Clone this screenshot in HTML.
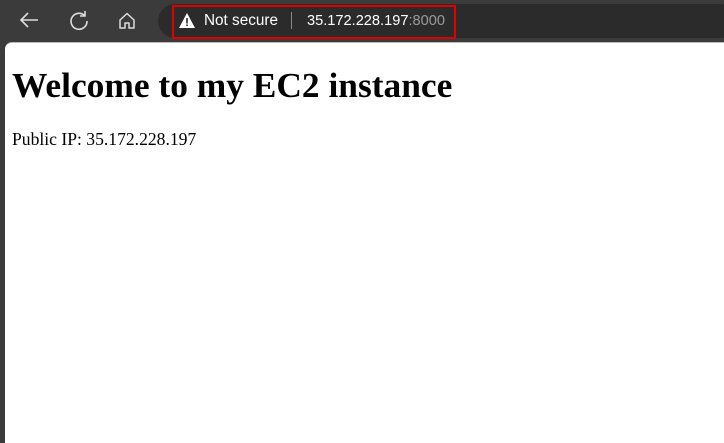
<!DOCTYPE html>
<html><head><style>
html,body{margin:0;padding:0;width:724px;height:436px;overflow:hidden;background:#3b3b3b;}
.bar{position:absolute;left:0;top:0;width:724px;height:43px;background:#3b3b3b;}
.pill{position:absolute;left:158px;top:4px;width:580px;height:34px;background:#2b2b2b;border-radius:17px;}
.red{position:absolute;left:172px;top:5px;width:280px;height:30px;border:2px solid #e00000;}
.txt{position:absolute;top:13px;font:14.6px "Liberation Sans",sans-serif;color:#fff;white-space:nowrap;}
.page{position:absolute;left:5px;top:42px;width:730px;height:400px;background:#fff;border-top-left-radius:7px;border-top:1px solid #bbb;}
h1{position:absolute;left:7px;top:21px;margin:0;font:bold 35.4px "Liberation Serif",serif;color:#000;white-space:nowrap;}
p{position:absolute;left:7px;top:86px;margin:0;font:17.6px "Liberation Serif",serif;color:#000;white-space:nowrap;}
</style></head><body>
<div class="bar"></div>
<svg style="position:absolute;left:18px;top:10px" width="24" height="20" viewBox="0 0 24 20"><path d="M20 10H3M10 3L3 10L10 17" stroke="#ddd" stroke-width="1.6" fill="none"/></svg>
<svg style="position:absolute;left:68px;top:10px" width="22" height="22" viewBox="0 0 22 22"><path d="M17 6A8 8 0 1 0 19 11" stroke="#ddd" stroke-width="1.6" fill="none"/><path d="M17 1V6H12" stroke="#ddd" stroke-width="1.6" fill="none"/></svg>
<svg style="position:absolute;left:117px;top:11px" width="20" height="20" viewBox="0 0 20 20"><path d="M3 9L10 2.5L17 9V17H12V12H8V17H3Z" stroke="#ddd" stroke-width="1.5" fill="none" stroke-linejoin="round"/></svg>
<div class="pill"></div>
<div class="red"></div>
<svg style="position:absolute;left:178px;top:12px" width="18" height="17" viewBox="0 0 18 17"><path d="M9 1L17 16H1Z" fill="#fff"/><rect x="8.2" y="6" width="1.6" height="5.5" fill="#2b2b2b"/><rect x="8.2" y="12.5" width="1.6" height="1.6" fill="#2b2b2b"/></svg>
<div class="txt" style="left:204px;font-size:15.3px;top:12px">Not secure</div>
<div style="position:absolute;left:291px;top:12px;width:1px;height:17px;background:#888"></div>
<div class="txt" style="left:307px">35.172.228.197<span style="color:#9a9a9a">:8000</span></div>
<div class="page">
<h1>Welcome to my EC2 instance</h1>
<p>Public IP: 35.172.228.197</p>
</div>
</body></html>
